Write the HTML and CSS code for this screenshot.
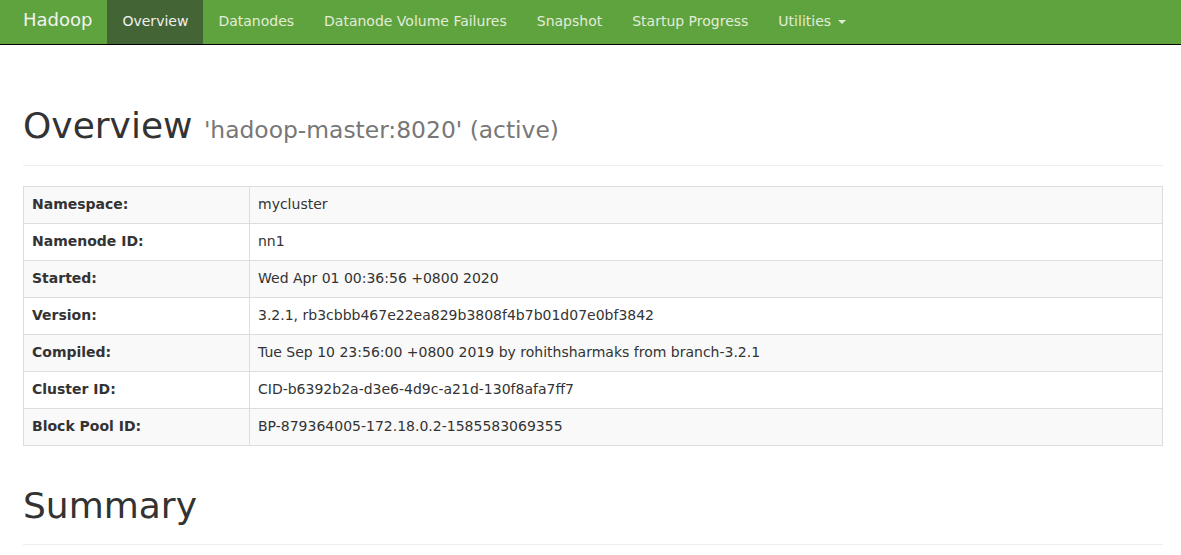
FILE: index.html
```html
<!DOCTYPE html>
<html>
<head>
<meta charset="utf-8">
<title>Namenode information</title>
<link rel="stylesheet" href="styles.css">
</head>
<body>
<header class="navbar">
  <a class="brand" href="#">Hadoop</a>
  <ul class="nav">
    <li class="active"><a href="#">Overview</a></li>
    <li><a href="#">Datanodes</a></li>
    <li><a href="#">Datanode Volume Failures</a></li>
    <li><a href="#">Snapshot</a></li>
    <li><a href="#">Startup Progress</a></li>
    <li><a href="#">Utilities <span class="caret"></span></a></li>
  </ul>
</header>
<main class="container">
  <div class="page-header first">
    <h1>Overview <small>'hadoop-master:8020' (active)</small></h1>
  </div>
  <table class="info">
    <tbody>
      <tr><th>Namespace:</th><td>mycluster</td></tr>
      <tr><th>Namenode ID:</th><td>nn1</td></tr>
      <tr><th>Started:</th><td>Wed Apr 01 00:36:56 +0800 2020</td></tr>
      <tr><th>Version:</th><td>3.2.1, rb3cbbb467e22ea829b3808f4b7b01d07e0bf3842</td></tr>
      <tr><th>Compiled:</th><td>Tue Sep 10 23:56:00 +0800 2019 by rohithsharmaks from branch-3.2.1</td></tr>
      <tr><th>Cluster ID:</th><td>CID-b6392b2a-d3e6-4d9c-a21d-130f8afa7ff7</td></tr>
      <tr><th>Block Pool ID:</th><td>BP-879364005-172.18.0.2-1585583069355</td></tr>
    </tbody>
  </table>
  <div class="page-header second">
    <h1>Summary</h1>
  </div>
</main>
</body>
</html>
```
FILE: styles.css
```css
html, body {
  margin: 0;
  padding: 0;
}
body {
  font-family: "DejaVu Sans", sans-serif;
  font-size: 14px;
  line-height: 20px;
  color: #333;
  background: #fff;
}
a { text-decoration: none; }

.navbar {
  display: flex;
  align-items: stretch;
  background: #5fa33e;
  border-bottom: 1px solid #000;
  padding-left: 8px;
  height: 44px;
}
.brand {
  display: block;
  padding: 10px 15px 14px;
  font-size: 18px;
  line-height: 20px;
  color: #f2f2f2;
}
.nav {
  display: flex;
  list-style: none;
  margin: 0;
  padding: 0;
}
.nav li a {
  display: block;
  padding: 11px 15px 13px;
  line-height: 20px;
  color: #e2ecd9;
}
.nav li.active a {
  background: #436434;
  color: #f0f0f0;
}
.caret {
  display: inline-block;
  width: 0;
  height: 0;
  margin-left: 2px;
  vertical-align: middle;
  border-top: 4px solid;
  border-left: 4px solid transparent;
  border-right: 4px solid transparent;
}

.container {
  padding: 0 18px 0 23px;
}
.page-header {
  padding-bottom: 19px;
  border-bottom: 1px solid #eee;
  margin: 40px 0 20px;
}
.page-header.first {
  margin-top: 61px;
}
.page-header h1 {
  margin: 0;
  font-size: 36px;
  line-height: 39.6px;
  font-weight: 500;
}
.page-header h1 small {
  font-size: 65%;
  line-height: 1;
  color: #777;
  font-weight: 400;
}

.info {
  width: 100%;
  border-collapse: collapse;
  border: 1px solid #ddd;
  margin-bottom: 20px;
}
.info th, .info td {
  border: 1px solid #ddd;
  padding: 7px 8px 9px;
  text-align: left;
  vertical-align: top;
  line-height: 20px;
}
.info th {
  width: 209px;
  font-weight: bold;
}
.info tr:nth-child(odd) {
  background: #f9f9f9;
}
```
